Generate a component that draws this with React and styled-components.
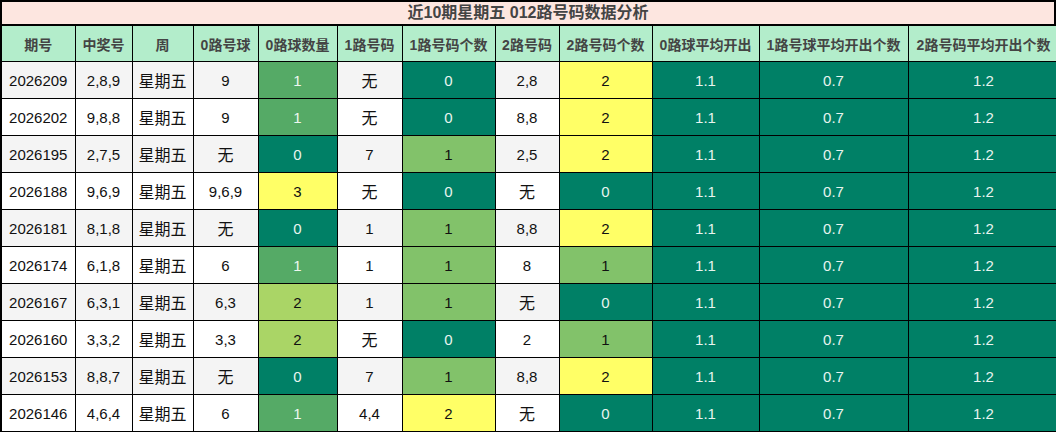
import React from "react";
import styled, { createGlobalStyle } from "styled-components";

const GlobalStyle = createGlobalStyle`
  html, body {
    margin: 0;
    padding: 0;
    background: #fff;
  }
  body {
    font-family: "Liberation Sans", "Noto Sans CJK SC", sans-serif;
  }
`;

const columns = [
  { title: "期号", width: 74 },
  { title: "中奖号", width: 57 },
  { title: "周", width: 61 },
  { title: "0路号球", width: 65 },
  { title: "0路球数量", width: 79 },
  { title: "1路号码", width: 65 },
  { title: "1路号码个数", width: 93 },
  { title: "2路号码", width: 64 },
  { title: "2路号码个数", width: 93 },
  { title: "0路球平均开出", width: 107 },
  { title: "1路号球平均开出个数", width: 149 },
  { title: "2路号码平均开出个数", width: 151 },
];

// tone per count: 0 dark green, 1 green, 2 yellow etc.
const zeroTone = ["dark", "mid", "lime", "yellow"];
const otherTone = ["dark", "light", "yellow"];

const rows = [
  ["2026209", "2,8,9", "9", 1, "无", 0, "2,8", 2],
  ["2026202", "9,8,8", "9", 1, "无", 0, "8,8", 2],
  ["2026195", "2,7,5", "无", 0, "7", 1, "2,5", 2],
  ["2026188", "9,6,9", "9,6,9", 3, "无", 0, "无", 0],
  ["2026181", "8,1,8", "无", 0, "1", 1, "8,8", 2],
  ["2026174", "6,1,8", "6", 1, "1", 1, "8", 1],
  ["2026167", "6,3,1", "6,3", 2, "1", 1, "无", 0],
  ["2026160", "3,3,2", "3,3", 2, "无", 0, "2", 1],
  ["2026153", "8,8,7", "无", 0, "7", 1, "8,8", 2],
  ["2026146", "4,6,4", "6", 1, "4,4", 2, "无", 0],
];

const tones = {
  dark: { bg: "#008066", fg: "#e8f4ef" },
  mid: { bg: "#55aa66", fg: "#eef7ef" },
  light: { bg: "#82c26a", fg: "#111" },
  lime: { bg: "#aad566", fg: "#111" },
  yellow: { bg: "#ffff66", fg: "#111" },
};

const App = () => {
  return (
    <>
      <GlobalStyle />
      <Frame>
        <Title>近10期星期五 012路号码数据分析</Title>
        <Table>
          <colgroup>
            {columns.map((c) => (
              <col key={c.title} style={{ width: c.width }} />
            ))}
          </colgroup>
          <thead>
            <tr>
              {columns.map((c) => (
                <Head key={c.title}>{c.title}</Head>
              ))}
            </tr>
          </thead>
          <tbody>
            {rows.map((r, i) => (
              <Row key={r[0]} $odd={i % 2 === 0}>
                <Cell>{r[0]}</Cell>
                <Cell>{r[1]}</Cell>
                <Cell $cjk>星期五</Cell>
                <Cell $cjk={r[2] === "无"}>{r[2]}</Cell>
                <Cell $tone={zeroTone[r[3]]}>{r[3]}</Cell>
                <Cell $cjk={r[4] === "无"}>{r[4]}</Cell>
                <Cell $tone={otherTone[r[5]]}>{r[5]}</Cell>
                <Cell $cjk={r[6] === "无"}>{r[6]}</Cell>
                <Cell $tone={otherTone[r[7]]}>{r[7]}</Cell>
                <Cell $tone="dark">1.1</Cell>
                <Cell $tone="dark">0.7</Cell>
                <Cell $tone="dark">1.2</Cell>
              </Row>
            ))}
          </tbody>
        </Table>
      </Frame>
    </>
  );
};

export default App;

const Frame = styled.div`
  width: 1056px;
  height: 432px;
  overflow: hidden;
`;

const Title = styled.div`
  box-sizing: border-box;
  width: 1056px;
  height: 26px;
  border: 2px solid #000;
  background: #fde6e0;
  color: #444;
  font-size: 16px;
  font-weight: 700;
  line-height: 22px;
  text-align: center;
`;

const Table = styled.table`
  width: 1058px;
  table-layout: fixed;
  border-collapse: collapse;
  border-left: 2px solid #000;
`;

const Head = styled.th`
  height: 35px;
  padding: 0;
  border: 1px solid #000;
  border-top: none;
  background: #b3edcb;
  color: #444;
  font-size: 14px;
  font-weight: 700;
  text-align: center;
  white-space: nowrap;
`;

const Row = styled.tr`
  background: ${(p) => (p.$odd ? "#f4f4f4" : "#fff")};
`;

const Cell = styled.td`
  height: 36px;
  padding: 0;
  border: 1px solid #000;
  text-align: center;
  font-size: 15px;
  color: ${(p) => (p.$tone ? tones[p.$tone].fg : "#111")};
  background: ${(p) => (p.$tone ? tones[p.$tone].bg : "transparent")};
  ${(p) => p.$cjk && "font-size: 16px;"}
`;
